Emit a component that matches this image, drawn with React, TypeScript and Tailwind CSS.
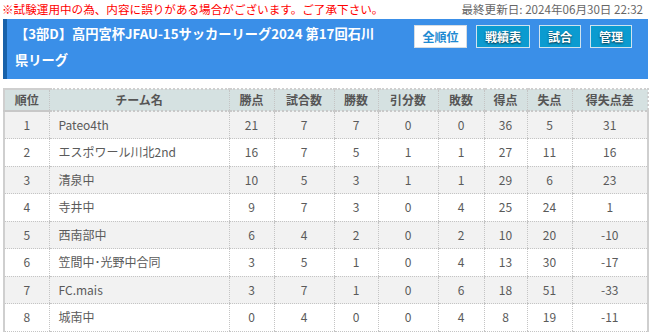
import React from "react";

const rows = [
  [1, "Pateo4th", 21, 7, 7, 0, 0, 36, 5, 31],
  [2, "エスポワール川北2nd", 16, 7, 5, 1, 1, 27, 11, 16],
  [3, "清泉中", 10, 5, 3, 1, 1, 29, 6, 23],
  [4, "寺井中", 9, 7, 3, 0, 4, 25, 24, 1],
  [5, "西南部中", 6, 4, 2, 0, 2, 10, 20, -10],
  [6, "笠間中･光野中合同", 3, 5, 1, 0, 4, 13, 30, -17],
  [7, "FC.mais", 3, 7, 1, 0, 6, 18, 51, -33],
  [8, "城南中", 0, 4, 0, 0, 4, 8, 19, -11],
];

const heads = ["順位", "チーム名", "勝点", "試合数", "勝数", "引分数", "敗数", "得点", "失点", "得失点差"];
const widths = [45, 180, 45, 60, 44, 60, 46, 43, 45, 76];

export default function App() {
  return (
    <div
      className="w-[652px] h-[336px] overflow-hidden bg-white"
      style={{ fontFamily: '"Noto Sans CJK JP", "Noto Sans", sans-serif' }}
    >
      <div className="flex h-[19px] items-center justify-between pl-[2px] pr-[9px] text-[11.6px] leading-none">
        <span className="text-[#ff0000]">※試験運用中の為、内容に誤りがある場合がございます。ご了承下さい。</span>
        <span className="text-[#666]">最終更新日: 2024年06月30日 22:32</span>
      </div>
      <div className="ml-[3px] mr-[4px] flex h-[60px] justify-between border-l-[4px] border-[#1761aa] bg-[#3a8fe8]">
        <div className="pl-[8px] pt-[2px] text-[13.25px] font-bold leading-[26px] text-white">
          <div className="whitespace-nowrap">【3部D】高円宮杯JFAU-15サッカーリーグ2024 第17回石川</div>
          <div className="whitespace-nowrap">県リーグ</div>
        </div>
        <div className="flex gap-[9px] pr-[16px] pt-[6px]">
          <div className="flex h-[23px] w-[53px] items-center justify-center border border-[#d6dde3] bg-white text-[12px] font-bold text-[#1e8ad2]">
            全順位
          </div>
          {["戦績表", "試合", "管理"].map((t, i) => (
            <div
              key={t}
              className={`flex h-[23px] items-center justify-center border border-[#cfe3ef] bg-[#0b9bd0] text-[12px] font-bold text-white [text-shadow:0_1px_2px_rgba(0,0,0,0.7)] ${
                i === 0 ? "w-[54px]" : "w-[42px]"
              }`}
            >
              {t}
            </div>
          ))}
        </div>
      </div>
      <table
        className="ml-[3px] mt-[9px] border-collapse text-[12px] text-[#5a5a5a]"
        style={{ width: 644, tableLayout: "fixed" }}
      >
        <colgroup>
          {widths.map((w, i) => (
            <col key={i} style={{ width: w }} />
          ))}
        </colgroup>
        <thead>
          <tr className="h-[22px] bg-[#d5e1e1]">
            {heads.map((h, i) => (
              <th
                key={h}
                className={`border-t-2 border-b-2 border-t-[#cfcfcf] border-b-[#c8c8c8] p-0 text-center font-bold leading-none text-[#555] ${
                  i === 0 ? "border-l-2 border-l-[#cfcfcf]" : "border-l border-dotted border-l-[#c4c4c4]"
                } ${i === heads.length - 1 ? "border-r-2 border-r-[#cfcfcf]" : ""}`}
                style={i === 0 ? { borderLeftStyle: "solid" } : undefined}
              >
                {h}
              </th>
            ))}
          </tr>
        </thead>
        <tbody>
          {rows.map((r, ri) => (
            <tr key={ri} className={`h-[27.5px] ${ri % 2 === 0 ? "bg-[#f2f2f2]" : "bg-white"}`}>
              {r.map((c, ci) => (
                <td
                  key={ci}
                  className={`border-b border-dotted border-b-[#c4c4c4] p-0 leading-none ${
                    ci === 1 ? "pl-[9px] text-left" : "text-center"
                  } ${
                    ci === 0
                      ? "border-l-2 border-l-[#cfcfcf] [border-left-style:solid]"
                      : "border-l border-l-[#c4c4c4]"
                  } ${ci === r.length - 1 ? "border-r-2 border-r-[#cfcfcf] [border-right-style:solid]" : ""}`}
                >
                  {c}
                </td>
              ))}
            </tr>
          ))}
        </tbody>
      </table>
    </div>
  );
}
